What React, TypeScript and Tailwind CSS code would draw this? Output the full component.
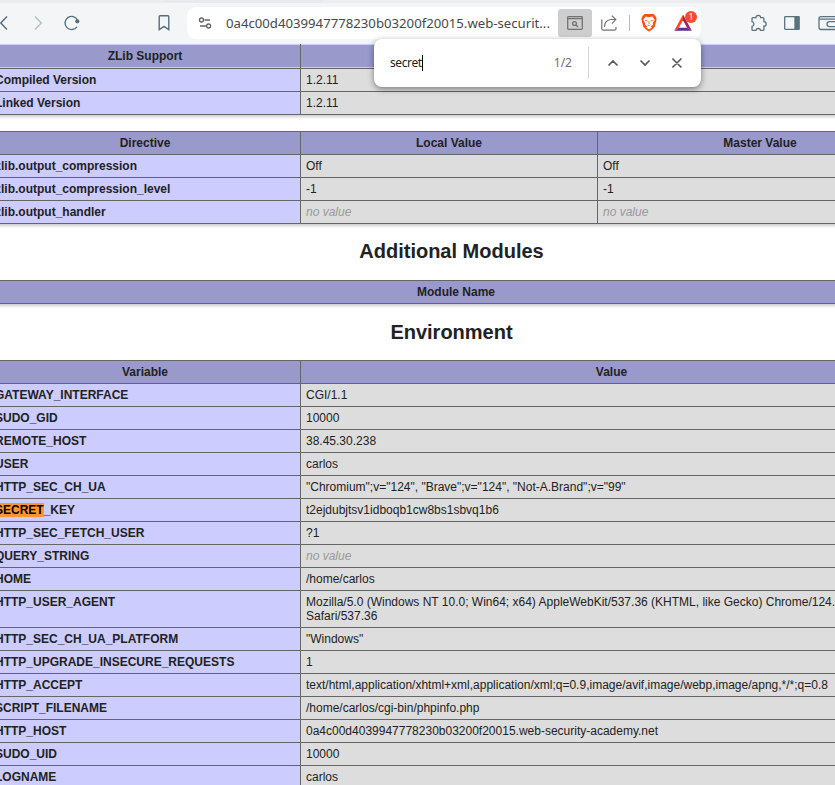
import type { ReactNode } from "react";

const ARIAL = "font-['Liberation_Sans',Arial,sans-serif]";
const UI = "font-['Noto_Sans','Open_Sans',sans-serif]";

type Row = [ReactNode, ...ReactNode[]];

const none = <i className="text-[#999]">no value</i>;

const environment: Row[] = [
  ["GATEWAY_INTERFACE", "CGI/1.1"],
  ["SUDO_GID", "10000"],
  ["REMOTE_HOST", "38.45.30.238"],
  ["USER", "carlos"],
  ["HTTP_SEC_CH_UA", "\"Chromium\";v=\"124\", \"Brave\";v=\"124\", \"Not-A.Brand\";v=\"99\""],
  [<><mark className="bg-[#ff9632] text-black">SECRET</mark>_KEY</>, "t2ejdubjtsv1idboqb1cw8bs1sbvq1b6"],
  ["HTTP_SEC_FETCH_USER", "?1"],
  ["QUERY_STRING", none],
  ["HOME", "/home/carlos"],
  ["HTTP_USER_AGENT", <>Mozilla/5.0 (Windows NT 10.0; Win64; x64) AppleWebKit/537.36 (KHTML, like Gecko) Chrome/124.0.0.0<br />Safari/537.36</>],
  ["HTTP_SEC_CH_UA_PLATFORM", "\"Windows\""],
  ["HTTP_UPGRADE_INSECURE_REQUESTS", "1"],
  ["HTTP_ACCEPT", "text/html,application/xhtml+xml,application/xml;q=0.9,image/avif,image/webp,image/apng,*/*;q=0.8"],
  ["SCRIPT_FILENAME", "/home/carlos/cgi-bin/phpinfo.php"],
  ["HTTP_HOST", "0a4c00d4039947778230b03200f20015.web-security-academy.net"],
  ["SUDO_UID", "10000"],
  ["LOGNAME", "carlos"],
];

interface InfoTableProps {
  cols: string;
  head: string[];
  rows: Row[];
  className?: string;
  /** The header touches the toolbar and is edged with light lines instead of a top border. */
  flush?: boolean;
}

function InfoTable({ cols, head, rows, className = "", flush = false }: InfoTableProps) {
  return (
    <div className={`w-[934px] border-l border-[#666] text-[12px] leading-[14px] shadow-[1px_2px_3px_#ccc] ${flush ? "" : "border-t"} ${className}`}>
      <div className={`grid ${cols}`}>
        {head.map((h) => (
          <div
            key={h}
            className={`border-b border-r border-[#666] bg-[#9999cc] px-[5px] text-center font-bold ${
              flush ? "py-[5px] shadow-[inset_0_1px_#ccccff,inset_0_-1px_#ccccee]" : "py-1"
            }`}
          >
            {h}
          </div>
        ))}
      </div>
      {rows.map((r, i) => (
        <div key={i} className={`grid ${cols}`}>
          {r.map((c, j) => (
            <div key={j} className={`whitespace-nowrap border-b border-r border-[#666] px-[5px] py-1 ${j === 0 ? "bg-[#ccccff] font-bold" : "bg-[#dddddd]"}`}>{c}</div>
          ))}
        </div>
      ))}
    </div>
  );
}

function Toolbar() {
  return (
    <header className={`h-[44px] shrink-0 bg-[#f3f5f7] ${UI}`}>
      <div className="flex h-[3px] bg-[#ebedef]"><div className="ml-[163px] w-[160px] rounded-b-sm bg-[#e8eaed]" /></div>
      <div className="flex h-[40px] items-center">
        <svg className="h-10 w-[187px] shrink-0" viewBox="0 3 187 40" fill="none" stroke="#566f7b" strokeWidth="1.4">
          <path d="M7 16.5 0.8 23 7 29.5" />
          <path d="m35 16.5 6.3 6.5-6.3 6.5" stroke="#b3bfc4" />
          <path d="M77.6 20.2a6.6 6.6 0 1 0-.6 6.6" />
          <circle cx="77.3" cy="21.3" r="2.1" fill="#566f7b" stroke="none" />
          <path d="M159.2 16.7q0-.9.9-.9h7.8q.9 0 .9.9V29.7l-4.8-3.3-4.8 3.3z" />
        </svg>
        <div className="flex h-8 w-[514px] shrink-0 items-center rounded-[9px] bg-white">
          <svg className="h-8 w-[39px] shrink-0" viewBox="187 7 39 32" fill="none" stroke="#5f6368" strokeWidth="1.3">
            <circle cx="201.5" cy="20" r="2" /><path d="M204.5 20h5.5M200 26h6" /><circle cx="208.6" cy="26" r="2" />
          </svg>
          <span className="w-[332px] whitespace-nowrap text-[13.18px] leading-8 text-[#45484c]">0a4c00d4039947778230b03200f20015.web-securit...</span>
          <svg className="h-8 w-[143px] shrink-0" viewBox="558 7 143 32" fill="none">
            <rect x="558" y="9" width="34" height="28" rx="3" fill="#cecece" />
            <g stroke="#727272" strokeWidth="1.3">
              <rect x="567.7" y="16.7" width="14.6" height="12.7" rx=".8" /><path d="M568 18.6h14" />
              <circle cx="574.5" cy="23.5" r="1.9" /><path d="m576 25 2 2" />
            </g>
            <path d="M601.8 19.5v9.2q0 1.5 1.5 1.5h11.2q1.5 0 1.5-1.5V27M604.5 27q0-6.5 6-7.5h5M611.8 15.6l4 4-4 4" stroke="#6d747a" strokeWidth="1.2" />
            <path d="M629.5 15v16" stroke="#b8bbbd" />
            <path d="M644.5 14h9l2 2 1.2 3-1.9 7.6q-2 3-5.8 5.2-3.8-2.2-5.8-5.2L641.3 19l1.2-3z" fill="#fb5010" />
            <path d="m645.6 16.6 3.4.6 3.4-.6 2.3 3.2-1.9 3.5.3 1.4-2.3 1.5 1 1.2-2.8 2-2.8-2 1-1.2-2.3-1.5.3-1.4-1.9-3.5z" fill="#fff" />
            <path d="m645.2 20.3 2.3.7M652.8 20.3l-2.3.7M649 21v3M647.6 24.9l1.4.6 1.4-.6" stroke="#fb5010" strokeWidth=".8" />
            <path d="M683 14.5 674.2 30.7l4.7-3L683 20.3z" fill="#ff4724" />
            <path d="m683 14.5 8.8 16.2-4.7-3L683 20.3z" fill="#9e1f63" />
            <path d="M674.2 30.7h17.6l-4.7-3h-8.2z" fill="#662d91" />
            <circle cx="691" cy="17" r="6" fill="#fb4b2b" />
            <text x="691" y="20.2" textAnchor="middle" fontSize="9" fill="#fff">1</text>
          </svg>
        </div>
        <svg className="h-10 w-[134px] shrink-0" viewBox="701 3 134 40" fill="none" stroke="#5a737f" strokeWidth="1.3">
          <path d="M752.9 17.6h3.1a2.3 2.3 0 0 1 4.6 0h2.4q.9 0 .9.9v3.1a2.3 2.3 0 0 1 0 4.6v3.2q0 .9-.9.9h-2.5a2.3 2.3 0 0 0-4.5 0h-3.1q-.9 0-.9-.9v-3.1a2.4 2.4 0 0 0 0-4.7v-3.1q0-.9.9-.9z" />
          <rect x="784.7" y="16.7" width="14.2" height="12.6" rx=".5" /><path d="M795 17h4v12h-4z" fill="#5a737f" />
          <path d="M835 16.7h-14q-2 0-2 2v8.8q0 2 2 2h14M819 19.2h16M835 21.6h-5.5a2.5 2.5 0 0 0 0 5h5.5" />
        </svg>
      </div>
    </header>
  );
}

function FindBar() {
  return (
    <div className={`absolute left-[374px] top-[39px] flex h-12 w-[327px] items-center rounded-lg bg-white shadow-[0_2px_6px_rgba(0,0,0,.45)] ${UI}`}>
      <span className="ml-4 text-[12px] leading-4 tracking-[-0.4px] text-[#202124]">secret</span>
      <span className="h-4 w-px bg-black" />
      <span className="ml-auto text-[12px] text-[#6b6b70]">1/2</span>
      <span className="ml-4 h-8 w-px bg-[#d5d7dd]" />
      <svg className="h-12 w-28" viewBox="589 39 112 48" fill="none" stroke="#5a5a5a" strokeWidth="1.7">
        <path d="m608.5 65.5 4.5-4.5 4.5 4.5M640.5 60.5l4.5 4.5 4.5-4.5M672.4 58.5l9 9M681.4 58.5l-9 9" />
      </svg>
    </div>
  );
}

export default function App() {
  return (
    <div className={`relative flex h-[785px] w-[835px] flex-col overflow-hidden bg-white text-[#222] ${ARIAL}`}>
      <Toolbar />
      <main className="-ml-[11px] w-[934px]">
        <InfoTable flush cols="grid-cols-[311px_1fr]" head={["ZLib Support", "enabled"]} rows={[["Compiled Version", "1.2.11"], ["Linked Version", "1.2.11"]]} />
        <InfoTable cols="grid-cols-[311px_297px_1fr]" head={["Directive", "Local Value", "Master Value"]} className="mt-4" rows={[
          ["zlib.output_compression", "Off", "Off"],
          ["zlib.output_compression_level", "-1", "-1"],
          ["zlib.output_handler", none, none],
        ]} />
        <h2 className="mt-[15px] h-[41px] w-[925px] text-center text-[20px] font-bold leading-[24px]">Additional Modules</h2>
        <InfoTable cols="grid-cols-1" head={["Module Name"]} rows={[]} />
        <h2 className="mt-4 h-10 w-[925px] text-center text-[20px] font-bold leading-[24px]">Environment</h2>
        <InfoTable cols="grid-cols-[311px_1fr]" head={["Variable", "Value"]} rows={environment} />
      </main>
      <FindBar />
    </div>
  );
}
